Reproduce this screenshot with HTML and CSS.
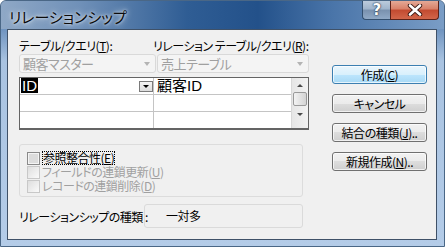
FILE: index.html
```html
<!DOCTYPE html>
<html lang="ja">
<head>
    <meta charset="UTF-8">
    <title>リレーションシップ</title>
    <link rel="stylesheet" href="styles.css">
</head>
<body>
    <div class="window">
        <!-- Title bar -->
        <div class="titlebar">
            <span class="title">リレーションシップ</span>
            <div class="caption">
                <span class="cap-btn help">?</span>
                <span class="cap-btn close">
                    <svg width="16" height="12" viewBox="0 0 16 12">
                        <path d="M3 1.5 L13 10.5 M13 1.5 L3 10.5" stroke="#3a1a14" stroke-width="4.4" stroke-linecap="round"/>
                        <path d="M3 1.5 L13 10.5 M13 1.5 L3 10.5" stroke="#fff" stroke-width="2.6" stroke-linecap="round"/>
                    </svg>
                </span>
            </div>
        </div>

        <!-- Client area -->
        <div class="client">
            <div class="main">
                <div class="labels">
                    <span class="lbl-left">テーブル/クエリ(<u>T</u>):</span>
                    <span>リレーション テーブル/クエリ(<u>R</u>):</span>
                </div>

                <div class="combos">
                    <div class="combo left">顧客マスター<span class="arrow"></span></div>
                    <div class="combo right">売上テーブル<span class="arrow"></span></div>
                </div>

                <div class="sheet">
                    <div class="cells">
                        <div class="row">
                            <div class="cell first"><span class="sel">ID</span><span class="drop"></span></div>
                            <div class="cell">顧客ID</div>
                        </div>
                        <div class="row">
                            <div class="cell first"></div>
                            <div class="cell"></div>
                        </div>
                        <div class="row">
                            <div class="cell first"></div>
                            <div class="cell"></div>
                        </div>
                        <div class="row last">
                            <div class="cell first"></div>
                            <div class="cell"></div>
                        </div>
                    </div>
                    <div class="vscroll">
                        <span class="up"></span>
                        <span class="thumb"></span>
                        <span class="down"></span>
                    </div>
                </div>

                <div class="group">
                    <div class="check">
                        <span class="box on"></span>
                        <span class="focus">参照整合性(<u>E</u>)</span>
                    </div>
                    <div class="check disabled">
                        <span class="box"></span>
                        <span>フィールドの連鎖更新(<u>U</u>)</span>
                    </div>
                    <div class="check disabled">
                        <span class="box"></span>
                        <span>レコードの連鎖削除(<u>D</u>)</span>
                    </div>
                </div>

                <div class="kind">
                    <span class="kind-label">リレーションシップの種類 :</span>
                    <div class="kind-box">一対多</div>
                </div>
            </div>

            <div class="buttons">
                <button class="btn default">作成(<u>C</u>)</button>
                <button class="btn">キャンセル</button>
                <button class="btn">結合の種類(<u>J</u>)..</button>
                <button class="btn">新規作成(<u>N</u>)..</button>
            </div>
        </div>
    </div>
</body>
</html>
```

FILE: styles.css
```css
/* Page */
body {
    margin: 0;
    width: 445px;
    height: 247px;
    overflow: hidden;
    font-family: "Noto Sans CJK JP", "Noto Sans", sans-serif;
    font-size: 12px;
    font-feature-settings: "palt";
    letter-spacing: -0.5px;
    white-space: nowrap;
    color: #000;
}

u {
    text-decoration: underline;
    text-underline-offset: 1px;
}

/* Window frame */
.window {
    width: 445px;
    height: 247px;
    box-sizing: border-box;
    display: flex;
    flex-direction: column;
    border: 1px solid #4a6786;
    border-radius: 6px 6px 0 0;
    background: linear-gradient(180deg, #7c9cc2 0px, #6f93bf 28px, #a9c3e1 60px, #b4cce8 100%);
}

.titlebar {
    height: 28px;
    display: flex;
    justify-content: space-between;
    align-items: flex-start;
    background: linear-gradient(90deg, #8fa8c6 0%, #6f90b8 18%, #2f5d94 42%, #23518a 58%, #4a75a9 75%, #7a9dc6 100%);
    border-radius: 5px 5px 0 0;
}

.title {
    margin: 5px 0 0 8px;
    font-size: 15px;
    letter-spacing: 0;
    color: #0b0b0b;
    text-shadow: 0 0 6px rgba(255, 255, 255, 0.9), 0 0 3px rgba(255, 255, 255, 0.8);
}

.caption {
    display: flex;
    margin-right: 5px;
}

.cap-btn {
    height: 19px;
    display: flex;
    align-items: center;
    justify-content: center;
    box-sizing: border-box;
    border: 1px solid #34506f;
    border-top: none;
}

.help {
    width: 28px;
    border-right: none;
    border-radius: 0 0 0 4px;
    background: linear-gradient(180deg, #bccbdc 0%, #9fb4cb 45%, #7991ae 50%, #90a9c6 100%);
    color: #fff;
    font: bold 15px "DejaVu Sans", sans-serif;
    text-shadow: 0 0 2px #1b2d44, 0 0 1px #1b2d44;
}

.close {
    width: 49px;
    border-color: #5c2219;
    border-radius: 0 0 4px 0;
    background: linear-gradient(180deg, #e4a996 0%, #d88068 45%, #c24a30 50%, #d2664a 100%);
}

/* Client area */
.client {
    flex: 1;
    margin: 0 7px 6px 6px;
    border: 1px solid #3f5168;
    background: #f0f0f0;
    display: flex;
    padding: 8px 0 0 11px;
}

.main {
    width: 290px;
    display: flex;
    flex-direction: column;
}

.labels {
    display: flex;
    height: 15px;
    line-height: 15px;
}

.lbl-left {
    width: 134px;
}

.combos {
    display: flex;
    gap: 1px;
    margin-top: 1px;
}

.combo {
    height: 19px;
    box-sizing: border-box;
    border: 1px solid #d9d9d9;
    border-radius: 3px;
    background: #f4f4f4;
    color: #a0a0a0;
    font-size: 13px;
    line-height: 17px;
    padding-left: 3px;
    display: flex;
    justify-content: space-between;
    align-items: center;
}

.combo.left {
    width: 137px;
}

.combo.right {
    flex: 1;
}

.arrow {
    width: 0;
    height: 0;
    margin-right: 5px;
    border-left: 3.5px solid transparent;
    border-right: 3.5px solid transparent;
    border-top: 4px solid #b4b4b4;
}

/* Field grid */
.sheet {
    margin-top: 4px;
    height: 53px;
    box-sizing: border-box;
    border: 1px solid #646464;
    border-bottom-width: 2px;
    background: #fff;
    display: flex;
    overflow: hidden;
}

.cells {
    flex: 1;
    display: flex;
    flex-direction: column;
}

.row {
    display: flex;
    height: 16px;
    flex-shrink: 0;
    border-bottom: 1px solid #c4c4c4;
}

.row.last {
    height: 3px;
    border-bottom: none;
}

.cell {
    flex: 1;
    font-family: "Liberation Sans", "Noto Sans CJK JP", sans-serif;
    font-size: 15px;
    letter-spacing: 0;
    line-height: 16px;
    padding-left: 3px;
}

.cell.first {
    flex: none;
    width: 132px;
    padding-left: 1px;
    border-right: 1px solid #c4c4c4;
    display: flex;
    justify-content: space-between;
}

.sel {
    background: #000;
    color: #fff;
    padding: 0 1px;
    height: 15px;
    line-height: 15px;
}

.drop {
    width: 14px;
    height: 11px;
    margin-top: 3px;
    box-sizing: border-box;
    border: 1px solid #7a7a7a;
    background: linear-gradient(180deg, #f4f4f4, #dcdcdc);
    position: relative;
}

.drop::after {
    content: "";
    position: absolute;
    left: 3px;
    top: 3px;
    border-left: 3px solid transparent;
    border-right: 3px solid transparent;
    border-top: 3px solid #000;
}

.vscroll {
    width: 16px;
    border-left: 1px solid #d8d8d8;
    background: linear-gradient(90deg, #e6e6e6, #f2f2f2);
    display: flex;
    flex-direction: column;
    align-items: center;
}

.up, .down {
    width: 0;
    height: 0;
    border-left: 3px solid transparent;
    border-right: 3px solid transparent;
}

.up {
    margin-top: 6px;
    border-bottom: 3px solid #4a4a4a;
}

.down {
    margin-top: 7px;
    border-top: 3px solid #4a4a4a;
}

.thumb {
    margin-top: 5px;
    width: 14px;
    height: 14px;
    box-sizing: border-box;
    border: 1px solid #9a9a9a;
    border-radius: 2px;
    background: linear-gradient(90deg, #f3f3f3, #e0e0e0 60%, #d4d4d4);
}

/* Options group */
.group {
    margin-top: 14px;
    width: 284px;
    height: 53px;
    box-sizing: border-box;
    border: 1px solid #dcdcdc;
    border-radius: 3px;
    padding: 6px 0 0 7px;
}

.check {
    display: flex;
    align-items: center;
    height: 14px;
    line-height: 14px;
}

.check.disabled {
    color: #a0a0a0;
}

.box {
    width: 11px;
    height: 11px;
    border: 1px solid #c8c8c8;
    background: linear-gradient(135deg, #dedede, #fafafa);
    margin-right: 2px;
}

.box.on {
    border-color: #8a8a8a;
    background: #dcdcdc;
    box-shadow: inset 0 0 0 1px #f4f4f4;
}

.focus {
    outline: 1px dotted #000;
    outline-offset: -1px;
    padding: 0 1px;
}

/* Relationship type */
.kind {
    margin-top: 7px;
    display: flex;
    align-items: center;
}

.kind-label {
    width: 125px;
}

.kind-box {
    width: 159px;
    height: 24px;
    box-sizing: border-box;
    border: 1px solid #dadada;
    border-radius: 3px;
    line-height: 22px;
    padding-left: 21px;
}

/* Command buttons */
.buttons {
    margin-left: 23px;
    padding-top: 27px;
    display: flex;
    flex-direction: column;
    gap: 10px;
}

.btn {
    width: 95px;
    height: 19px;
    padding: 0;
    border: 1px solid #707070;
    border-radius: 3px;
    background: linear-gradient(180deg, #f2f2f2 0%, #ebebeb 50%, #dddddd 50%, #cfcfcf 100%);
    font-family: "Noto Sans CJK JP", sans-serif;
    font-size: 12px;
    font-feature-settings: "palt";
    letter-spacing: -0.5px;
    line-height: 16px;
    color: #000;
    box-shadow: inset 0 0 0 1px rgba(255, 255, 255, 0.7);
}

.btn.default {
    border-color: #3c7fb1;
    background: linear-gradient(180deg, #eaf6fd 0%, #d9f0fc 50%, #bee6fd 50%, #a7d9f5 100%);
}
```
